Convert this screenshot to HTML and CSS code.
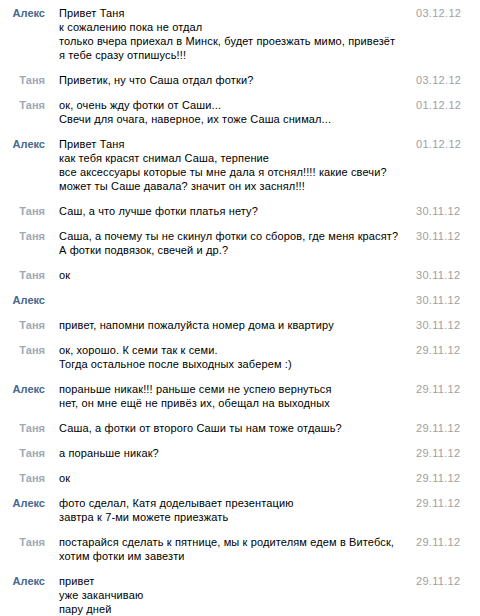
FILE: index.html
```html
<!DOCTYPE html>
<html lang="ru">
<head>
    <meta charset="UTF-8">
    <title>Сообщения</title>
    <link rel="stylesheet" href="styles.css">
</head>
<body>
    <div class="history">
        <div class="msg">
            <div class="author">Алекс</div>
            <div class="text">Привет Таня<br>к сожалению пока не отдал<br>только вчера приехал в Минск, будет проезжать мимо, привезёт<br>я тебе сразу отпишусь!!!</div>
            <div class="date">03.12.12</div>
        </div>
        <div class="msg">
            <div class="author her">Таня</div>
            <div class="text">Приветик, ну что Саша отдал фотки?</div>
            <div class="date">03.12.12</div>
        </div>
        <div class="msg">
            <div class="author her">Таня</div>
            <div class="text">ок, очень жду фотки от Саши...<br>Свечи для очага, наверное, их тоже Саша снимал...</div>
            <div class="date">01.12.12</div>
        </div>
        <div class="msg">
            <div class="author">Алекс</div>
            <div class="text">Привет Таня<br>как тебя красят снимал Саша, терпение<br>все аксессуары которые ты мне дала я отснял!!!! какие свечи?<br>может ты Саше давала? значит он их заснял!!!</div>
            <div class="date">01.12.12</div>
        </div>
        <div class="msg">
            <div class="author her">Таня</div>
            <div class="text">Саш, а что лучше фотки платья нету?</div>
            <div class="date">30.11.12</div>
        </div>
        <div class="msg">
            <div class="author her">Таня</div>
            <div class="text">Саша, а почему ты не скинул фотки со сборов, где меня красят?<br>А фотки подвязок, свечей и др.?</div>
            <div class="date">30.11.12</div>
        </div>
        <div class="msg">
            <div class="author her">Таня</div>
            <div class="text">ок</div>
            <div class="date">30.11.12</div>
        </div>
        <div class="msg">
            <div class="author">Алекс</div>
            <div class="text"></div>
            <div class="date">30.11.12</div>
        </div>
        <div class="msg">
            <div class="author her">Таня</div>
            <div class="text">привет, напомни пожалуйста номер дома и квартиру</div>
            <div class="date">30.11.12</div>
        </div>
        <div class="msg">
            <div class="author her">Таня</div>
            <div class="text">ок, хорошо. К семи так к семи.<br>Тогда остальное после выходных заберем :)</div>
            <div class="date">29.11.12</div>
        </div>
        <div class="msg">
            <div class="author">Алекс</div>
            <div class="text">пораньше никак!!! раньше семи не успею вернуться<br>нет, он мне ещё не привёз их, обещал на выходных</div>
            <div class="date">29.11.12</div>
        </div>
        <div class="msg">
            <div class="author her">Таня</div>
            <div class="text">Саша, а фотки от второго Саши ты нам тоже отдашь?</div>
            <div class="date">29.11.12</div>
        </div>
        <div class="msg">
            <div class="author her">Таня</div>
            <div class="text">а пораньше никак?</div>
            <div class="date">29.11.12</div>
        </div>
        <div class="msg">
            <div class="author her">Таня</div>
            <div class="text">ок</div>
            <div class="date">29.11.12</div>
        </div>
        <div class="msg">
            <div class="author">Алекс</div>
            <div class="text">фото сделал, Катя доделывает презентацию<br>завтра к 7-ми можете приезжать</div>
            <div class="date">29.11.12</div>
        </div>
        <div class="msg">
            <div class="author her">Таня</div>
            <div class="text">постарайся сделать к пятнице, мы к родителям едем в Витебск,<br>хотим фотки им завезти</div>
            <div class="date">29.11.12</div>
        </div>
        <div class="msg">
            <div class="author">Алекс</div>
            <div class="text">привет<br>уже заканчиваю<br>пару дней</div>
            <div class="date">29.11.12</div>
        </div>
    </div>
</body>
</html>
```

FILE: styles.css
```css
html, body {
    overflow: hidden;
}
body {
    margin: 0;
    background-color: #ffffff;
    font-family: 'Liberation Sans', Arial, sans-serif;
    font-size: 11px;
    line-height: 14px;
    color: #000000;
}
.history {
    width: 460px;
}
.msg {
    display: grid;
    grid-template-columns: 45px 1fr 44px;
    column-gap: 14px;
    padding: 6px 0 5px;
}
.author {
    text-align: right;
    font-weight: bold;
    color: #45688e;
    min-height: 14px;
}
.author.her {
    color: #a0a9b6;
}
.text {
    white-space: nowrap;
    letter-spacing: 0.13px;
}
.date {
    color: #a0a0a0;
    text-align: right;
    letter-spacing: 0.3px;
}
```
